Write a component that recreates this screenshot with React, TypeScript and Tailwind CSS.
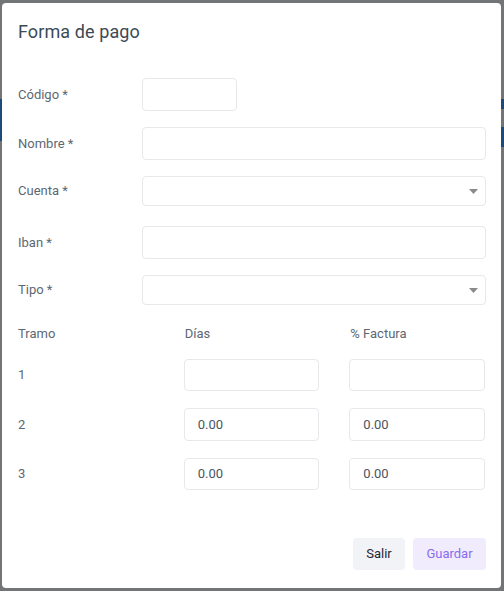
import React from "react";

const labelCls = "w-[124px] shrink-0 text-[13px] leading-[20px] text-[#5d6873]";
const inputCls = "h-[33px] rounded-[4px] border border-[#e6e8eb] bg-white";

function Caret() {
  return (
    <svg width="9" height="5" viewBox="0 0 9 5" className="absolute right-[7px] top-[12px]">
      <path d="M0 0 L9 0 L4.5 5 Z" fill="#8a8a8a" />
    </svg>
  );
}

function Num({ v }: { v?: string }) {
  return (
    <div className="h-full rounded-[4px] border border-[#e6e8eb] bg-white flex items-center pl-[13px] text-[13px] text-[#4a5562]">
      {v}
    </div>
  );
}

export default function App() {
  return (
    <div className="relative w-[504px] h-[591px] bg-[#727476] overflow-hidden" style={{ fontFamily: "Roboto, 'Liberation Sans', sans-serif" }}>
      <div className="absolute left-0 top-[99px] w-[3px] h-[42px] bg-[#1b4a7b]" />
      <div className="absolute right-0 top-[99px] w-[3px] h-[10px] bg-[#1b4a7b]" />
      <div className="absolute right-0 top-[127px] w-[3px] h-[20px] bg-[#1b4a7b]" />
      <div className="absolute left-[2px] top-[3px] w-[499px] h-[585px] bg-white rounded-[4px] pl-[16px] pr-[15px] pt-[17px]">
        <div className="text-[18px] leading-[24px] text-[#3c4a56] tracking-[0.1px]">Forma de pago</div>

        <div className="mt-[34px] flex items-center h-[33px]">
          <div className={labelCls}>Código *</div>
          <div className={inputCls + " w-[95px]"} />
        </div>
        <div className="mt-[16px] flex items-center h-[33px]">
          <div className={labelCls}>Nombre *</div>
          <div className={inputCls + " flex-1"} />
        </div>
        <div className="mt-[16px] flex items-center h-[30px]">
          <div className={labelCls}>Cuenta *</div>
          <div className="relative flex-1 h-[30px] rounded-[4px] border border-[#e6e8eb] bg-white">
            <Caret />
          </div>
        </div>
        <div className="mt-[20px] flex items-center h-[33px]">
          <div className={labelCls}>Iban *</div>
          <div className={inputCls + " flex-1"} />
        </div>
        <div className="mt-[16px] flex items-center h-[30px]">
          <div className={labelCls}>Tipo *</div>
          <div className="relative flex-1 h-[30px] rounded-[4px] border border-[#e6e8eb] bg-white">
            <Caret />
          </div>
        </div>

        <div className="mr-[1px]">
          <div className="mt-[19px] grid grid-cols-3 gap-x-[30px] text-[13px] leading-[20px] text-[#5d6873]">
            <div>Tramo</div>
            <div className="pl-[1px]">Días</div>
            <div className="pl-[1px]">% Factura</div>
          </div>
          <div className="mt-[15px] grid grid-cols-3 gap-x-[30px] h-[32px] items-center">
            <div className="text-[13px] text-[#5d6873]">1</div>
            <Num />
            <Num />
          </div>
          <div className="mt-[17px] grid grid-cols-3 gap-x-[30px] h-[33px] items-center">
            <div className="text-[13px] text-[#5d6873]">2</div>
            <Num v="0.00" />
            <Num v="0.00" />
          </div>
          <div className="mt-[17px] grid grid-cols-3 gap-x-[30px] h-[32px] items-center">
            <div className="text-[13px] text-[#5d6873]">3</div>
            <Num v="0.00" />
            <Num v="0.00" />
          </div>
        </div>

        <div className="mt-[48px] flex justify-end gap-[8px]">
          <button className="h-[32px] w-[52px] rounded-[4px] bg-[#f2f3f7] text-[13px] text-[#1f2430]">Salir</button>
          <button className="h-[32px] w-[73px] rounded-[4px] bg-[#f0ecfd] text-[13px] text-[#8a6cf2]">Guardar</button>
        </div>
      </div>
    </div>
  );
}
